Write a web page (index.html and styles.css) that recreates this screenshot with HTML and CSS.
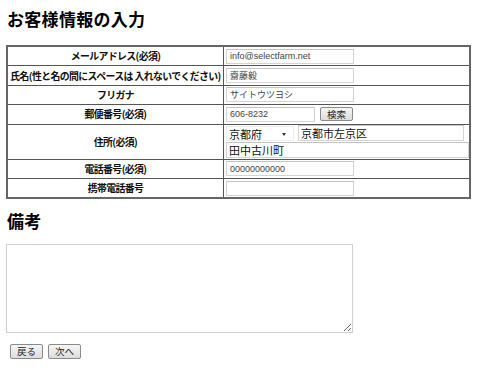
FILE: index.html
```html
<!DOCTYPE html>
<html lang="ja">
<head>
<meta charset="utf-8">
<link rel="stylesheet" href="styles.css">
</head>
<body>
<h1 class="title">お客様情報の入力</h1>
<table class="form">
  <tr>
    <th class="label">メールアドレス(必須)</th>
    <td class="value"><input class="txt w-std" type="text" value="info@selectfarm.net"></td>
  </tr>
  <tr>
    <th class="label">氏名(性と名の間にスペースは 入れないでください)</th>
    <td class="value"><input class="txt w-std" type="text" value="齋藤毅"></td>
  </tr>
  <tr>
    <th class="label">フリガナ</th>
    <td class="value"><input class="txt w-std" type="text" value="サイトウツヨシ"></td>
  </tr>
  <tr>
    <th class="label">郵便番号(必須)</th>
    <td class="value"><div class="line"><input class="txt w-zip" type="text" value="606-8232"><button class="btn search">検索</button></div></td>
  </tr>
  <tr class="tall">
    <th class="label">住所(必須)</th>
    <td class="value">
      <div class="line"><span class="sel">京都府<span class="arrow"></span></span><input class="txt w-city big" type="text" value="京都市左京区"></div>
      <div class="line"><input class="txt w-addr big" type="text" value="田中古川町"></div>
    </td>
  </tr>
  <tr>
    <th class="label">電話番号(必須)</th>
    <td class="value"><input class="txt w-std" type="text" value="00000000000"></td>
  </tr>
  <tr>
    <th class="label">携帯電話番号</th>
    <td class="value"><input class="txt w-std" type="text" value=""></td>
  </tr>
</table>
<h2 class="title sub">備考</h2>
<textarea class="note"></textarea>
<div class="actions">
  <button class="btn">戻る</button>
  <button class="btn">次へ</button>
</div>
</body>
</html>
```
FILE: styles.css
```css
html, body {
  margin: 0;
  padding: 0;
  background: #fff;
}
body {
  padding: 0 6px;
  font-family: "Noto Sans CJK JP", "Noto Sans", sans-serif;
  color: #000;
}
.title {
  margin: 8px 0 0 1px;
  font-size: 17px;
  line-height: 22px;
  font-weight: bold;
  letter-spacing: 0.3px;
}
.form {
  margin-top: 15px;
  border-collapse: collapse;
  width: 465px;
  border: 2px solid #666;
  font-size: 10px;
  line-height: 12px;
}
.form th, .form td {
  border: 1px solid #555;
  padding: 0;
  height: 18.4px;
}
.label {
  width: 215px;
  font-size: 9.9px;
  font-weight: bold;
  text-align: center;
  white-space: nowrap;
  letter-spacing: -0.6px;
  color: #111;
}
.value {
  padding: 0 0 0 2px !important;
}
.tall th, .tall td { height: 34px; }
.line {
  display: flex;
  align-items: center;
  gap: 4px;
}
.txt {
  display: block;
  box-sizing: border-box;
  height: 15px;
  margin: 0;
  padding: 0 3px;
  border: 1px solid #d4d4d4;
  border-top-color: #c4c4c4;
  font-family: "Liberation Sans", "Noto Sans CJK JP", sans-serif;
  font-size: 9px;
  color: #444;
  background: #fff;
  outline: none;
}
.w-std { width: 128px; }
.w-zip { width: 89px; }
.w-city { width: 166px; }
.w-addr { width: 243px; margin-top: 1px; }
.big {
  height: 16px;
  font-family: "Noto Sans CJK JP", sans-serif;
  font-size: 11px;
  color: #111;
  padding: 0 2px;
}
.sel {
  box-sizing: border-box;
  position: relative;
  width: 68px;
  height: 15px;
  padding-left: 2px;
  font-size: 11px;
  line-height: 14px;
  color: #111;
  border: 1px solid #eee;
}
.arrow {
  position: absolute;
  right: 7px;
  top: 6px;
  width: 0;
  height: 0;
  border-left: 2.5px solid transparent;
  border-right: 2.5px solid transparent;
  border-top: 3px solid #333;
}
.btn {
  box-sizing: border-box;
  height: 15px;
  margin: 0;
  padding: 0 6px;
  border: 1px solid #8a8a8a;
  border-radius: 2px;
  background: linear-gradient(#f6f6f6, #dcdcdc);
  font-family: "Noto Sans CJK JP", sans-serif;
  font-size: 9.5px;
  line-height: 13px;
  color: #222;
}
.search {
  width: 33px;
  height: 14px;
  margin-left: 1px;
  padding: 0;
}
.sub {
  margin-top: 11px;
}
.note {
  display: block;
  box-sizing: border-box;
  width: 347px;
  height: 89px;
  margin: 12px 0 0 0;
  border: 1px solid #d0d0d0;
  resize: both;
}
.actions {
  display: flex;
  gap: 5px;
  margin: 11px 0 0 4px;
}
.actions .btn {
  width: 33px;
  height: 15px;
  padding: 0;
}
```
